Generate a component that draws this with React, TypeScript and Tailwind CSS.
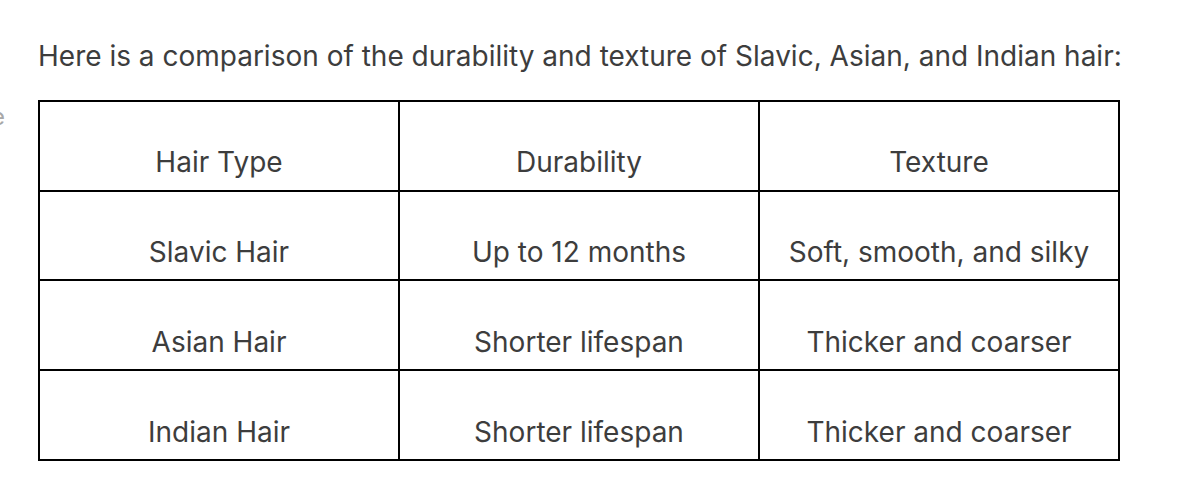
import React from "react";

const rows = [
  ["Slavic Hair", "Up to 12 months", "Soft, smooth, and silky"],
  ["Asian Hair", "Shorter lifespan", "Thicker and coarser"],
  ["Indian Hair", "Shorter lifespan", "Thicker and coarser"],
];

export default function App() {
  return (
    <div
      className="relative w-[1190px] h-[490px] bg-white overflow-hidden text-[#3d3d3d]"
      style={{ fontFamily: "Inter, 'Noto Sans', sans-serif" }}
    >
      <span className="absolute left-[-9px] top-[105px] text-[24px] leading-[24px] text-[#a8a8a8]">
        e
      </span>
      <div className="pl-[38px] pt-[39.3px]">
        <p className="text-[28px] leading-[34px] m-0 whitespace-nowrap">
          Here is a comparison of the durability and texture of Slavic, Asian, and Indian hair:
        </p>
        <table className="mt-[26.7px] w-[1082px] table-fixed border-collapse border-2 border-black text-[28px] leading-[34px]">
          <thead>
            <tr>
              <th className="border-2 border-black font-normal text-center pt-[43.5px] pb-[10.25px]">Hair Type</th>
              <th className="border-2 border-black font-normal text-center pt-[43.5px] pb-[10.25px]">Durability</th>
              <th className="border-2 border-black font-normal text-center pt-[43.5px] pb-[10.25px]">Texture</th>
            </tr>
          </thead>
          <tbody>
            {rows.map((r, i) => (
              <tr key={i}>
                {r.map((c, j) => (
                  <td key={j} className="border-2 border-black text-center pt-[43.5px] pb-[10.25px] whitespace-nowrap">
                    {c}
                  </td>
                ))}
              </tr>
            ))}
          </tbody>
        </table>
      </div>
    </div>
  );
}
